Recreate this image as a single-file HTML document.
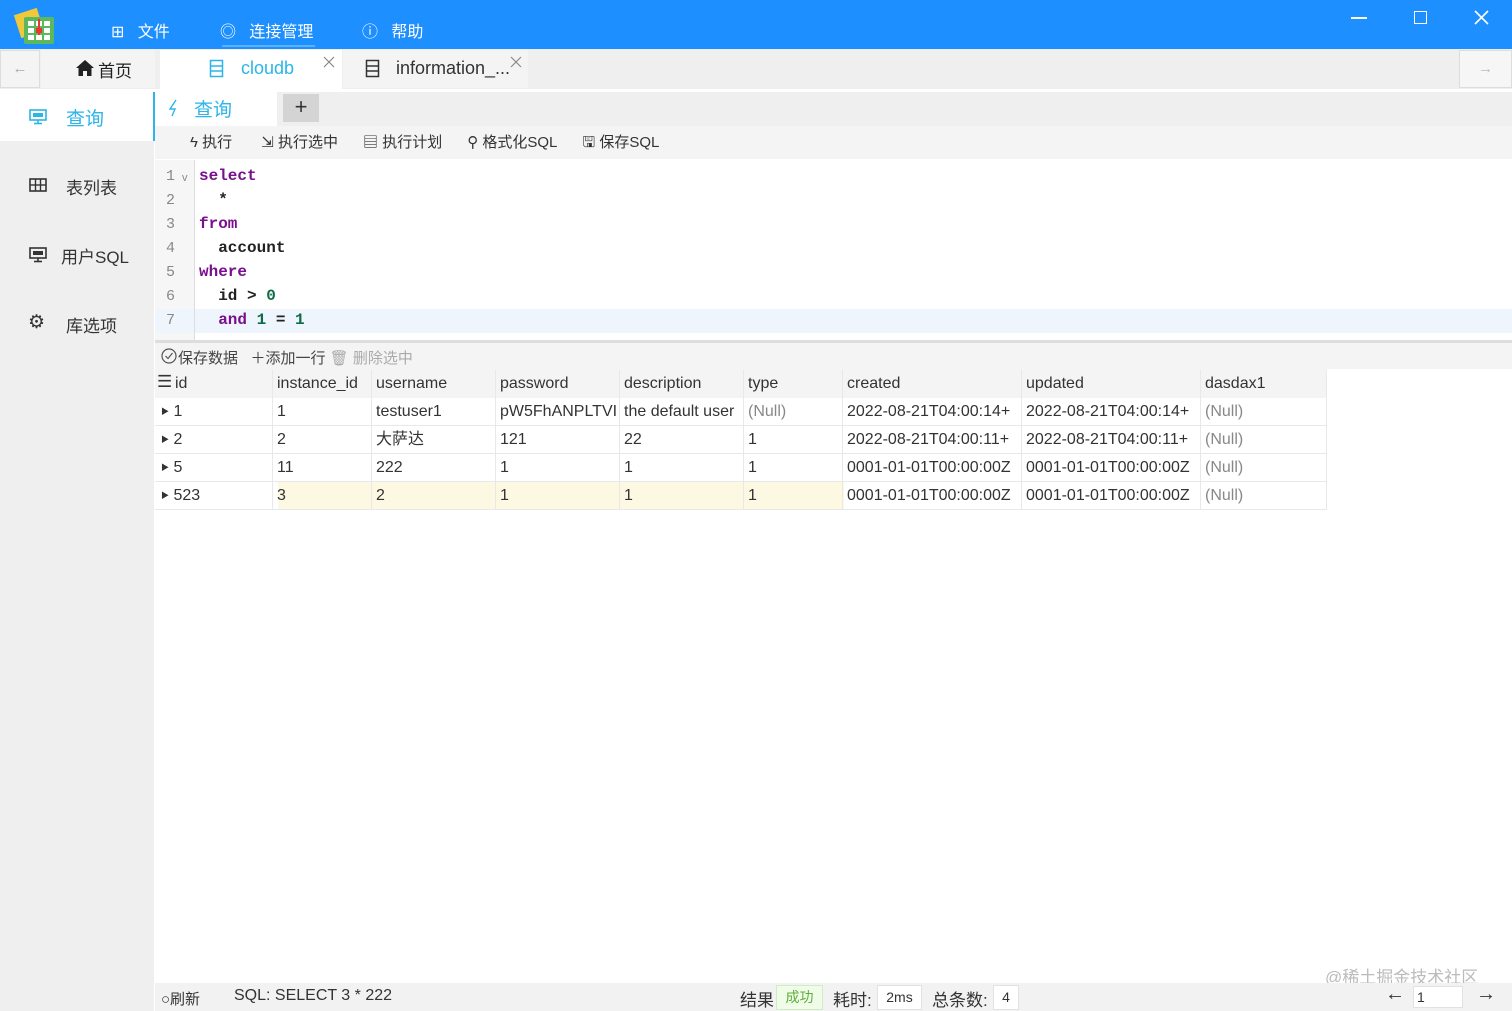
<!DOCTYPE html>
<html><head><meta charset="utf-8"><style>
*{box-sizing:border-box;margin:0;padding:0}
body{width:1512px;height:1011px;overflow:hidden;background:#fff;font-family:"Liberation Sans","Noto Sans CJK SC",sans-serif;color:#333;position:relative;font-size:15px}
.a{position:absolute;white-space:nowrap}
.mono{font-family:"Liberation Mono","DejaVu Sans Mono",monospace;font-size:16px;font-weight:bold}
.kw{color:#7a0f8e}.num{color:#106b45}
.cell{position:absolute;height:28px;line-height:28px;padding-left:4px;overflow:hidden;white-space:nowrap;font-size:16px;color:#333;border-right:1px solid #e8e8e8;border-bottom:1px solid #e8e8e8}
</style></head><body>
<!-- title bar -->
<div class="a" style="left:0;top:0;width:1512px;height:49px;background:#1e8ffe"></div>
<svg class="a" style="left:14px;top:5px" width="44" height="40"><rect x="3" y="6" width="24" height="24" fill="#f0c93a" transform="rotate(-18 15 18)"/><rect x="10" y="12" width="30" height="27" rx="2" fill="#5cb85c"/><g fill="#fff"><rect x="14" y="16" width="6" height="5"/><rect x="22" y="16" width="6" height="5"/><rect x="30" y="16" width="6" height="5"/><rect x="14" y="23" width="6" height="5"/><rect x="30" y="23" width="6" height="5"/><rect x="14" y="30" width="6" height="5"/><rect x="22" y="30" width="6" height="5"/><rect x="30" y="30" width="6" height="5"/></g><rect x="22" y="23" width="6" height="5" fill="#e33"/><rect x="24" y="14" width="2" height="16" fill="#e33"/></svg>
<div class="a" style="left:111px;top:18px;color:#fff;font-size:16px">&#x229E;&nbsp;&nbsp; 文件</div>
<div class="a" style="left:220px;top:18px;color:#fff;font-size:16px">&#x25CE;&nbsp;&nbsp; 连接管理</div>
<div class="a" style="left:222px;top:45px;width:93px;height:2px;background:#5ab2ff"></div>
<div class="a" style="left:362px;top:18px;color:#fff;font-size:16px">&#x24D8;&nbsp;&nbsp; 帮助</div>
<div class="a" style="left:1351px;top:17px;width:16px;height:2px;background:#fff"></div>
<div class="a" style="left:1414px;top:11px;width:13px;height:13px;border:1.5px solid #fff"></div>
<svg class="a" style="left:1474px;top:10px" width="15" height="15"><path d="M1 1L14 14M14 1L1 14" stroke="#fff" stroke-width="1.6"/></svg>
<!-- tab row -->
<div class="a" style="left:0;top:49px;width:1512px;height:40px;background:#efefef"></div>
<div class="a" style="left:0;top:50px;width:40px;height:38px;background:#f4f4f4;border:1px solid #ddd;color:#aaa;text-align:center;line-height:36px">&#x2190;</div>
<div class="a" style="left:41px;top:50px;width:114px;height:38px;background:#f4f4f4"></div>
<svg class="a" style="left:76px;top:60px" width="18" height="16"><path d="M9 0L0 8H2.5V16H7V11H11V16H15.5V8H18Z" fill="#222"/></svg>
<div class="a" style="left:98px;top:57px;font-size:17px;color:#222">首页</div>
<div class="a" style="left:160px;top:50px;width:182px;height:39px;background:#fff"></div>
<svg class="a" style="left:209px;top:59px" width="16" height="20"><rect x="1.5" y="1.5" width="12" height="16" fill="none" stroke="#2bb5e8" stroke-width="1.5"/><line x1="2" y1="7" x2="13" y2="7" stroke="#2bb5e8" stroke-width="1.5"/><line x1="2" y1="12" x2="13" y2="12" stroke="#2bb5e8" stroke-width="1.5"/></svg>
<div class="a" style="left:241px;top:58px;font-size:18px;color:#2bb5e8">cloudb</div>
<svg class="a" style="left:323px;top:56px" width="12" height="12"><path d="M1 1L11 11M11 1L1 11" stroke="#888" stroke-width="1.2"/></svg>
<div class="a" style="left:343px;top:50px;width:185px;height:38px;background:#f4f4f4"></div>
<svg class="a" style="left:365px;top:59px" width="16" height="20"><rect x="1.5" y="1.5" width="12" height="16" fill="none" stroke="#333" stroke-width="1.5"/><line x1="2" y1="7" x2="13" y2="7" stroke="#333" stroke-width="1.5"/><line x1="2" y1="12" x2="13" y2="12" stroke="#333" stroke-width="1.5"/></svg>
<div class="a" style="left:396px;top:58px;font-size:18px;color:#333">information_...</div>
<svg class="a" style="left:510px;top:56px" width="12" height="12"><path d="M1 1L11 11M11 1L1 11" stroke="#888" stroke-width="1.2"/></svg>
<div class="a" style="left:1459px;top:50px;width:53px;height:38px;background:#f6f6f6;border:1px solid #ddd;color:#bbb;text-align:center;line-height:36px">&#x2192;</div>
<div class="a" style="left:0;top:89px;width:1512px;height:3px;background:#fff"></div>
<!-- sidebar -->
<div class="a" style="left:0;top:92px;width:154px;height:919px;background:#efefef"></div>
<div class="a" style="left:0;top:92px;width:153px;height:49px;background:#fff"></div>
<div class="a" style="left:153px;top:92px;width:2px;height:49px;background:#2bb5e8"></div>
<svg class="a" style="left:29px;top:109px" width="18" height="16"><rect x="1" y="1" width="16" height="10" fill="none" stroke="#2bb5e8" stroke-width="1.6"/><rect x="4" y="4" width="10" height="4" fill="#2bb5e8"/><line x1="9" y1="11" x2="9" y2="14" stroke="#2bb5e8" stroke-width="1.6"/><line x1="5" y1="14.5" x2="13" y2="14.5" stroke="#2bb5e8" stroke-width="1.6"/></svg>
<div class="a" style="left:66px;top:104px;font-size:19px;color:#2bb5e8">查询</div>
<svg class="a" style="left:29px;top:178px" width="18" height="14"><rect x="1" y="1" width="16" height="12" fill="none" stroke="#333" stroke-width="1.6"/><line x1="1" y1="7" x2="17" y2="7" stroke="#333" stroke-width="1.4"/><line x1="6.5" y1="1" x2="6.5" y2="13" stroke="#333" stroke-width="1.4"/><line x1="11.5" y1="1" x2="11.5" y2="13" stroke="#333" stroke-width="1.4"/></svg>
<div class="a" style="left:66px;top:174px;font-size:17px;color:#333">表列表</div>
<svg class="a" style="left:29px;top:247px" width="18" height="16"><rect x="1" y="1" width="16" height="10" fill="none" stroke="#333" stroke-width="1.6"/><rect x="4" y="4" width="10" height="4" fill="#333"/><line x1="9" y1="11" x2="9" y2="14" stroke="#333" stroke-width="1.6"/><line x1="5" y1="14.5" x2="13" y2="14.5" stroke="#333" stroke-width="1.6"/></svg>
<div class="a" style="left:61px;top:243px;font-size:17px;color:#333">用户SQL</div>
<div class="a" style="left:28px;top:311px;font-size:19px;color:#333">&#x2699;</div>
<div class="a" style="left:66px;top:312px;font-size:17px;color:#333">库选项</div>
<!-- query tabs -->
<div class="a" style="left:155px;top:92px;width:1357px;height:34px;background:#efefef"></div>
<div class="a" style="left:155px;top:92px;width:122px;height:34px;background:#fff"></div>
<svg class="a" style="left:168px;top:99px" width="12" height="18"><path d="M8 1L2 10H7L4 17" fill="none" stroke="#2bb5e8" stroke-width="1.4"/></svg>
<div class="a" style="left:194px;top:95px;font-size:19px;color:#2bb5e8">查询</div>
<div class="a" style="left:283px;top:94px;width:36px;height:28px;background:#d4d4d4;text-align:center;line-height:26px;font-size:22px;color:#333">+</div>
<div class="a" style="left:155px;top:126px;width:1357px;height:33px;background:#f4f4f4"></div>
<div class="a" style="left:190px;top:131px;font-size:15px;color:#333">ϟ 执行&nbsp;&nbsp;&nbsp;&nbsp;&nbsp;&nbsp; ⇲ 执行选中&nbsp;&nbsp;&nbsp;&nbsp;&nbsp; ▤ 执行计划&nbsp;&nbsp;&nbsp;&nbsp;&nbsp; ⚲ 格式化SQL&nbsp;&nbsp;&nbsp;&nbsp;&nbsp; 🖫&#xFE0E; 保存SQL</div>
<!-- editor -->
<div class="a" style="left:155px;top:160px;width:39px;height:180px;background:#f6f6f6"></div>
<div class="a" style="left:155px;top:309px;width:1357px;height:24px;background:#eef5fc"></div>
<div class="a" style="left:194px;top:160px;width:1px;height:180px;background:#ddd"></div>
<div class="a mono" style="left:166px;top:165px;line-height:24px;color:#888;font-weight:normal;font-size:15px">1<br>2<br>3<br>4<br>5<br>6<br>7</div>
<div class="a" style="left:182px;top:172px;font-size:11px;color:#888">v</div>
<div class="a mono" style="left:199px;top:164px;line-height:24px;color:#222"><span class="kw">select</span><br>&nbsp;&nbsp;*<br><span class="kw">from</span><br>&nbsp;&nbsp;account<br><span class="kw">where</span><br>&nbsp;&nbsp;id &gt; <span class="num">0</span><br>&nbsp;&nbsp;<span class="kw">and</span> <span class="num">1</span> = <span class="num">1</span></div>
<div class="a" style="left:155px;top:340px;width:1357px;height:3px;background:#ddd"></div>
<!-- result toolbar -->
<div class="a" style="left:155px;top:343px;width:1357px;height:26px;background:#f4f4f4"></div>
<svg class="a" style="left:161px;top:348px" width="16" height="16"><circle cx="8" cy="8" r="7" fill="none" stroke="#555" stroke-width="1.2"/><path d="M4.5 8L7 10.5L11.5 5" fill="none" stroke="#555" stroke-width="1.2"/></svg>
<div class="a" style="left:178px;top:347px;font-size:15px;color:#444">保存数据&nbsp;&nbsp; ＋添加一行 <span style="color:#aaa">🗑&#xFE0E; 删除选中</span></div>
<!-- table -->
<div class="a" style="left:155px;top:369px;width:1172px;height:29px;background:#f4f4f4"></div>
<div class="a" style="left:278px;top:482px;width:566px;height:28px;background:#fdf8e1"></div>
<div id="t"></div>
<div class="a" style="left:157px;top:372px;font-size:17px;color:#333">&#x2630;</div>
<script>
var cols=[155,273,372,496,620,744,843,1022,1201,1327];
var head=["id","instance_id","username","password","description","type","created","updated","dasdax1"];
var rows=[["1","1","testuser1","pW5FhANPLTVI","the default user","(Null)","2022-08-21T04:00:14+","2022-08-21T04:00:14+","(Null)"],
["2","2","大萨达","121","22","1","2022-08-21T04:00:11+","2022-08-21T04:00:11+","(Null)"],
["5","11","222","1","1","1","0001-01-01T00:00:00Z","0001-01-01T00:00:00Z","(Null)"],
["523","3","2","1","1","1","0001-01-01T00:00:00Z","0001-01-01T00:00:00Z","(Null)"]];
var h="";
for(var c=0;c<9;c++){h+='<div class="cell" style="left:'+cols[c]+'px;top:370px;width:'+(cols[c+1]-cols[c])+'px;height:28px;border-bottom:none;'+(c==0?'padding-left:20px;':'')+'">'+head[c]+'</div>';}
for(var r=0;r<4;r++)for(var c=0;c<9;c++){var v=rows[r][c];var g=(v=="(Null)")?"color:#888;":"";
h+='<div class="cell" style="left:'+cols[c]+'px;top:'+(398+r*28)+'px;width:'+(cols[c+1]-cols[c])+'px;'+g+(c==0?'padding-left:6px;':'')+'">'+(c==0?'<span style="font-size:8px;vertical-align:2px">&#x25B6;</span> ':'')+v+'</div>';}
document.getElementById('t').innerHTML=h;
</script>
<!-- status -->
<div class="a" style="left:1325px;top:963px;font-size:17px;color:#bbb">@稀土掘金技术社区</div>
<div class="a" style="left:155px;top:983px;width:1357px;height:28px;background:#f2f2f2"></div>
<div class="a" style="left:161px;top:988px;font-size:15px;color:#333">&#x25CB;刷新</div>
<div class="a" style="left:234px;top:987px;font-size:16px;color:#333">SQL: SELECT 3 * 222</div>
<div class="a" style="left:740px;top:986px;font-size:17px;color:#333">结果</div>
<div class="a" style="left:776px;top:985px;width:47px;height:25px;background:#f0fbe8;border:1px solid #cdeec0;color:#5cb03c;font-size:14px;text-align:center;line-height:23px">成功</div>
<div class="a" style="left:833px;top:986px;font-size:17px;color:#333">耗时:</div>
<div class="a" style="left:877px;top:985px;width:45px;height:25px;background:#fff;border:1px solid #e2e2e2;font-size:14px;text-align:center;line-height:23px">2ms</div>
<div class="a" style="left:932px;top:986px;font-size:17px;color:#333">总条数:</div>
<div class="a" style="left:993px;top:985px;width:26px;height:25px;background:#fff;border:1px solid #e2e2e2;font-size:14px;text-align:center;line-height:23px">4</div>
<div class="a" style="left:1385px;top:983px;font-size:20px;color:#333">&#x2190;</div>
<div class="a" style="left:1413px;top:986px;width:50px;height:22px;background:#fff;border:1px solid #e2e2e2;font-size:14px;padding-left:3px;line-height:20px">1</div>
<div class="a" style="left:1476px;top:983px;font-size:20px;color:#333">&#x2192;</div>
</body></html>
